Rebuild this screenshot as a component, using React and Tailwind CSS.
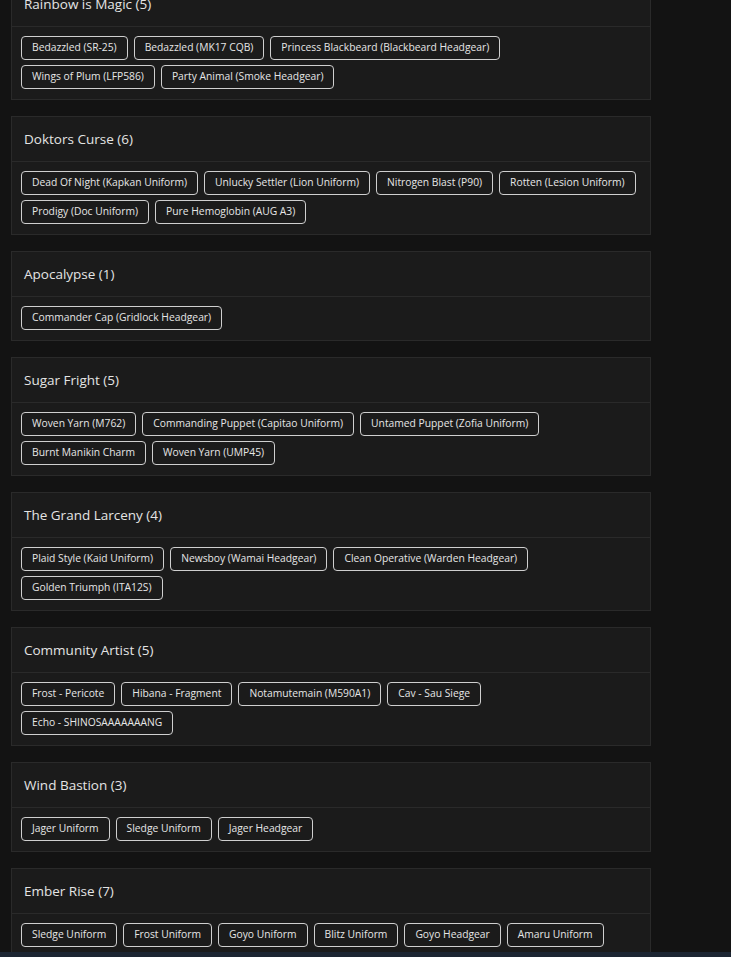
const bundles = [
  {
    name: "Rainbow is Magic",
    items: [
      "Bedazzled (SR-25)",
      "Bedazzled (MK17 CQB)",
      "Princess Blackbeard (Blackbeard Headgear)",
      "Wings of Plum (LFP586)",
      "Party Animal (Smoke Headgear)",
    ],
  },
  {
    name: "Doktors Curse",
    items: [
      "Dead Of Night (Kapkan Uniform)",
      "Unlucky Settler (Lion Uniform)",
      "Nitrogen Blast (P90)",
      "Rotten (Lesion Uniform)",
      "Prodigy (Doc Uniform)",
      "Pure Hemoglobin (AUG A3)",
    ],
  },
  { name: "Apocalypse", items: ["Commander Cap (Gridlock Headgear)"] },
  {
    name: "Sugar Fright",
    items: [
      "Woven Yarn (M762)",
      "Commanding Puppet (Capitao Uniform)",
      "Untamed Puppet (Zofia Uniform)",
      "Burnt Manikin Charm",
      "Woven Yarn (UMP45)",
    ],
  },
  {
    name: "The Grand Larceny",
    items: [
      "Plaid Style (Kaid Uniform)",
      "Newsboy (Wamai Headgear)",
      "Clean Operative (Warden Headgear)",
      "Golden Triumph (ITA12S)",
    ],
  },
  {
    name: "Community Artist",
    items: [
      "Frost - Pericote",
      "Hibana - Fragment",
      "Notamutemain (M590A1)",
      "Cav - Sau Siege",
      "Echo - SHINOSAAAAAAANG",
    ],
  },
  {
    name: "Wind Bastion",
    items: ["Jager Uniform", "Sledge Uniform", "Jager Headgear"],
  },
  {
    name: "Ember Rise",
    items: [
      "Sledge Uniform",
      "Frost Uniform",
      "Goyo Uniform",
      "Blitz Uniform",
      "Goyo Headgear",
      "Amaru Uniform",
      "Mira Uniform",
    ],
  },
];

function BundleCard({ name, items }) {
  return (
    <div className="border border-[#2a2a2a] bg-[#1b1b1b]">
      <div className="h-[45px] flex items-center px-3 border-b border-[#2a2a2a]">
        <h3 className="text-[13.5px] font-medium text-[#e4e4e4]">
          {name} ({items.length})
        </h3>
      </div>
      <div className="flex flex-wrap gap-x-[6px] gap-y-[5px] pl-[9px] pr-[13px] pt-[9px] pb-[10px]">
        {items.map((item, i) => (
          <span
            key={i}
            className="h-[24px] flex items-center px-[10px] border border-[#cfcfcf] rounded-[4px] text-[10.3px] text-[#e6e6e6] whitespace-nowrap"
          >
            {item}
          </span>
        ))}
      </div>
    </div>
  );
}

export default function App() {
  return (
    <div
      className="min-h-screen bg-[#131313] overflow-hidden"
      style={{ fontFamily: '"Open Sans", "Noto Sans", sans-serif' }}
    >
      <div className="w-[640px] ml-[11px] -mt-[19px] flex flex-col gap-4">
        {bundles.map((b) => (
          <BundleCard key={b.name} name={b.name} items={b.items} />
        ))}
      </div>
      <div className="fixed bottom-0 left-0 right-0 h-[5px] bg-[#1c2532]" />
    </div>
  );
}
